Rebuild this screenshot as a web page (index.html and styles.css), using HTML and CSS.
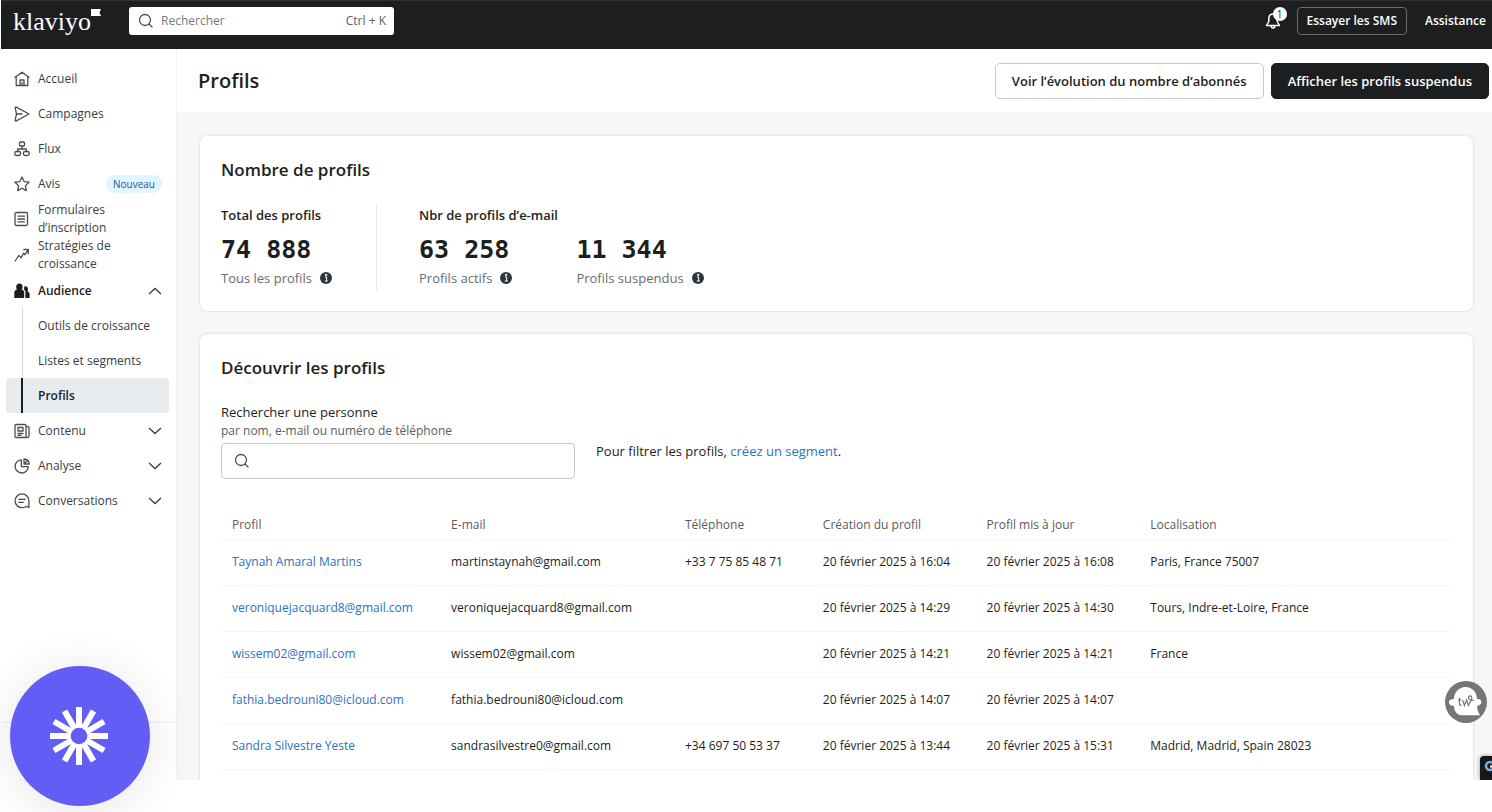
FILE: index.html
```html
<!DOCTYPE html>
<html lang="fr">
<head>
<meta charset="utf-8">
<title>Profils</title>
<link rel="stylesheet" href="styles.css">
</head>
<body>
<div class="app">
  <header class="topbar">
    <a class="logo" href="#">klaviyo<svg class="logo-flag" viewBox="0 0 10 7"><path d="M0 0h10L8.500 3.500 10 7H0z" fill="#fff"/></svg></a>
    <label class="global-search">
      <svg class="icon" viewBox="0 0 16 16"><circle cx="7" cy="7" r="5.500"/><path d="M11 11l3 3"/></svg>
      <input type="search" placeholder="Rechercher" aria-label="Rechercher">
      <span class="shortcut">Ctrl + K</span>
    </label>
    <div class="topbar-actions">
      <button class="bell" aria-label="Notifications">
        <svg class="icon bell-icon" viewBox="0 0 16 18"><path d="M8 2C5.200 2 3.800 4 3.800 6.500v3L1.500 13.500h13L12.200 9.500v-3C12.200 4 10.800 2 8 2zM6.200 14c0 2.500 3.600 2.500 3.600 0"/></svg>
        <span class="bell-count">1</span>
      </button>
      <button class="sms">Essayer les SMS</button>
      <a class="help" href="#">Assistance</a>
    </div>
  </header>

  <div class="body">
    <aside class="sidebar">
      <nav class="nav">
        <a class="nav-item" href="#"><svg class="icon" viewBox="0 0 16 16"><path d="M1 6.300L8 1.200l7 5.100M2.200 5.600v8.900h11.600V5.600M6 14.500V9h4v5.500M8 11.500v3"/></svg>Accueil</a>
        <a class="nav-item" href="#"><svg class="icon" viewBox="0 0 16 16"><path d="M1.200 1.800c0-.7.500-1 1.100-.7L15 8 2.300 14.900c-.6.300-1.200 0-1.100-.7L2.500 8zM2.500 8H8"/></svg>Campagnes</a>
        <a class="nav-item" href="#"><svg class="icon" viewBox="0 0 16 16"><rect x="5.500" y="1" width="5" height="4" rx="1"/><rect x=".8" y="10.500" width="5.800" height="4" rx="1.800"/><rect x="9.400" y="10.500" width="5.800" height="4" rx="1.800"/><path d="M8 5v3M3.700 10.500V8h8.600v2.500"/></svg>Flux</a>
        <a class="nav-item" href="#"><svg class="icon" viewBox="0 0 16 16"><path d="M8 1l2.100 4.600 4.900.6-3.600 3.400.9 5L8 12.200l-4.300 2.400.9-5L1 6.200l4.900-.6z"/></svg>Avis<span class="tag">Nouveau</span></a>
        <a class="nav-item" href="#"><svg class="icon" viewBox="0 0 16 16"><rect x="1" y="1.500" width="12.500" height="13" rx="1.500"/><path d="M4 5.200h6.500M4 8h6.500M4 10.800h6.500"/></svg><span>Formulaires d’inscription</span></a>
        <a class="nav-item" href="#"><svg class="icon" viewBox="0 0 16 16"><path d="M1.200 14l3.600-5.500 2.400 2.200 2.300-4.500 1.300 1.500L14 3.200M9.800 2.500h4.500v4.200"/></svg><span>Stratégies de croissance</span></a>
        <button class="nav-item nav-open" aria-expanded="true"><svg class="icon" viewBox="0 0 16 16"><path fill="#1d1e20" stroke="none" d="M5.500.5C7.600.5 8.700 2 8.600 4c0 1.300-.4 2-.8 2.600 1.600.6 2.400 1.600 2.400 3.200V15H.3V9.800c0-1.600.9-2.600 2.700-3.200C2.500 6 2.200 5.300 2.200 4 2.200 2 3.500.5 5.500.5zM10.200 3.500c2.600-.6 4 1 3.800 3-.1.900-.3 1.300-.6 1.800 1.400.7 2.200 1.600 2.200 3V15h-4.200V9.500c0-1.200-.6-2.200-1.600-2.900.5-1 .6-2 .4-3.100z"/></svg>Audience<svg class="chevron" viewBox="0 0 14 8"><path d="M1 7l6-5.500L13 7"/></svg></button>
        <div class="subnav">
          <a class="nav-sub" href="#">Outils de croissance</a>
          <a class="nav-sub" href="#">Listes et segments</a>
          <a class="nav-sub nav-current" href="#" aria-current="page">Profils</a>
        </div>
        <button class="nav-item"><svg class="icon" viewBox="0 0 16 16"><path d="M12 14.500H2.200c-.8 0-1.200-.4-1.200-1.200V2.700c0-.8.4-1.200 1.200-1.200h8.600c.8 0 1.200.4 1.200 1.200V13c0 2 3 2 3 0V4.800c0-.8-.4-1.200-1.200-1.200H12M4 4.500h5V8H4zM4 10.500h5M4 12.300h3"/></svg>Contenu<svg class="chevron" viewBox="0 0 14 8"><path d="M1 1l6 5.500L13 1"/></svg></button>
        <button class="nav-item"><svg class="icon" viewBox="0 0 16 16"><path d="M7.300 1.800A6.600 6.600 0 1 0 14.300 8.700H7.300zM10 1v5h5.200C15 3.200 13 1.200 10 1zM10 6l3.200-3.200"/></svg>Analyse<svg class="chevron" viewBox="0 0 14 8"><path d="M1 1l6 5.500L13 1"/></svg></button>
        <button class="nav-item"><svg class="icon" viewBox="0 0 16 16"><path d="M14.900 14.500V7.800A6.900 6.900 0 1 0 8 14.700c1.600 0 2.800-.4 4-1.300zM4.800 6.300h6.500M4.800 9.300h4.500"/></svg>Conversations<svg class="chevron" viewBox="0 0 14 8"><path d="M1 1l6 5.500L13 1"/></svg></button>
      </nav>
      <div class="sidebar-foot"></div>
    </aside>

    <main class="main">
      <div class="page-head">
        <h1>Profils</h1>
        <button class="btn">Voir l’évolution du nombre d’abonnés</button>
        <button class="btn btn-dark">Afficher les profils suspendus</button>
      </div>
      <div class="content">
        <section class="card">
          <h2>Nombre de profils</h2>
          <div class="stats">
            <div class="stat-group stat-total">
              <h3>Total des profils</h3>
              <div class="stat"><div class="number">74 888</div><div class="caption">Tous les profils <svg class="info" viewBox="0 0 12 12"><circle cx="6" cy="6" r="6" fill="#2c3640"/><path d="M5 5h1.600v4M4.800 9h3M5.500 2.300h1.300v1.300H5.500z" fill="none" stroke="#fff"/></svg></div></div>
            </div>
            <div class="stat-group">
              <h3>Nbr de profils d’e-mail</h3>
              <div class="stat-pair">
                <div class="stat"><div class="number">63 258</div><div class="caption">Profils actifs <svg class="info" viewBox="0 0 12 12"><circle cx="6" cy="6" r="6" fill="#2c3640"/><path d="M5 5h1.600v4M4.800 9h3M5.500 2.300h1.300v1.300H5.500z" fill="none" stroke="#fff"/></svg></div></div>
                <div class="stat"><div class="number">11 344</div><div class="caption">Profils suspendus <svg class="info" viewBox="0 0 12 12"><circle cx="6" cy="6" r="6" fill="#2c3640"/><path d="M5 5h1.600v4M4.800 9h3M5.500 2.300h1.300v1.300H5.500z" fill="none" stroke="#fff"/></svg></div></div>
              </div>
            </div>
          </div>
        </section>

        <section class="card">
          <h2>Découvrir les profils</h2>
          <div class="finder">
            <div class="field">
              <label for="person">Rechercher une personne</label>
              <span class="hint" id="person-hint">par nom, e-mail ou numéro de téléphone</span>
              <div class="field-box">
                <svg class="icon" viewBox="0 0 16 16"><circle cx="7" cy="7" r="5.500"/><path d="M11 11l3 3"/></svg>
                <input id="person" type="text" aria-describedby="person-hint">
              </div>
            </div>
            <p class="filter-note">Pour filtrer les profils, <a href="#">créez un segment</a>.</p>
          </div>
          <table class="profiles">
            <colgroup><col class="c-profile"><col class="c-mail"><col class="c-phone"><col class="c-date"><col class="c-date"><col></colgroup>
            <thead><tr><th>Profil</th><th>E-mail</th><th>Téléphone</th><th>Création du profil</th><th>Profil mis à jour</th><th>Localisation</th></tr></thead>
            <tbody>
              <tr><td><a href="#">Taynah Amaral Martins</a></td><td>martinstaynah@gmail.com</td><td>+33 7 75 85 48 71</td><td>20 février 2025 à 16:04</td><td>20 février 2025 à 16:08</td><td>Paris, France 75007</td></tr>
              <tr><td><a href="#">veroniquejacquard8@gmail.com</a></td><td>veroniquejacquard8@gmail.com</td><td></td><td>20 février 2025 à 14:29</td><td>20 février 2025 à 14:30</td><td>Tours, Indre-et-Loire, France</td></tr>
              <tr><td><a href="#">wissem02@gmail.com</a></td><td>wissem02@gmail.com</td><td></td><td>20 février 2025 à 14:21</td><td>20 février 2025 à 14:21</td><td>France</td></tr>
              <tr><td><a href="#">fathia.bedrouni80@icloud.com</a></td><td>fathia.bedrouni80@icloud.com</td><td></td><td>20 février 2025 à 14:07</td><td>20 février 2025 à 14:07</td><td></td></tr>
              <tr><td><a href="#">Sandra Silvestre Yeste</a></td><td>sandrasilvestre0@gmail.com</td><td>+34 697 50 53 37</td><td>20 février 2025 à 13:44</td><td>20 février 2025 à 15:31</td><td>Madrid, Madrid, Spain 28023</td></tr>
            </tbody>
          </table>
        </section>
      </div>
    </main>
  </div>

  <button class="chat" aria-label="Chat">
    <svg viewBox="0 0 42 42"><circle cx="21" cy="21" r="21" fill="#757776"/><path d="M9 18c0-7 5-12 11.500-12S32 11 32 18c2-.5 4.500.6 4.500 3S34 25 32.200 24.500c-.2 4 1 7.500 3 9.800H16.500C12 34.300 9 30 9 24.800 6.500 25 4 23.800 4 21.400S6.500 18 9 18z" fill="#fff"/><path d="M14.500 16.500v6c0 1.500.6 2 2 2M12.800 19h3.500M17.500 19l2 5.500 2-5.500 2 5.500 3.200-7c.7-3-3.200-3.500-3.200-.8 0 2.500 3 3 5.500 2.300" fill="none" stroke="#757776" stroke-width="1.200"/></svg>
  </button>
  <div class="corner"><svg viewBox="0 0 12 24"><circle cx="10" cy="10" r="4" fill="none" stroke="#7eb0dd" stroke-width="2.500"/><path d="M10 10.500h2" stroke="#fff" stroke-width="2"/></svg></div>
</div>

<button class="launcher" aria-label="Ouvrir le widget">
  <svg viewBox="-30 -30 60 60"><g stroke="#fff" stroke-width="6"><path d="M0-29V29M-29 0H29"/><path d="M-14.500-25.100L14.500 25.100M14.500-25.100L-14.500 25.100M-25.100-14.500L25.100 14.500M-25.100 14.500L25.100-14.500"/></g><circle r="11" fill="#fff"/><circle r="8.300" fill="#625df5"/></svg>
</button>
</body>
</html>
```
FILE: styles.css
```css
* { box-sizing: border-box; }

body {
  margin: 0;
  min-height: 100vh;
  background: #fff;
  color: #1d1e20;
  font: 12px/18px "Open Sans", "Noto Sans", sans-serif;
}

h1, h2, h3, p { margin: 0; font-weight: 600; }
a { color: #2b72bf; text-decoration: none; }
button, input { font: inherit; color: inherit; }
button { cursor: pointer; }

.app {
  position: relative;
  display: flex;
  flex-direction: column;
  height: calc(100vh - 32px);
  padding-left: 1px;
  overflow: hidden;
}

.icon {
  flex: none;
  width: 16px;
  height: 16px;
  fill: none;
  stroke: #4a4c4f;
  stroke-width: 1.3;
  stroke-linejoin: round;
  stroke-linecap: round;
}

/* Top bar */
.topbar {
  display: flex;
  flex: none;
  align-items: flex-start;
  height: 49px;
  padding: 6px 6px 0 12px;
  background: #1d1e20;
  border-top: 1px solid #303134;
}

.logo {
  display: flex;
  width: 116px;
  color: #fff;
  font: 26px/30px "Liberation Serif", serif;
}
.logo-flag { width: 10px; height: 7px; margin-top: 2px; }

.global-search {
  display: flex;
  align-items: center;
  gap: 7px;
  width: 265px;
  height: 28px;
  padding: 0 8px 0 9px;
  background: #fff;
  border-radius: 3px;
  color: #5a5c60;
}
.global-search input {
  flex: 1;
  min-width: 0;
  padding: 0;
  border: 0;
  outline: 0;
  background: none;
}
.global-search input::placeholder { color: #77797c; }

.topbar-actions {
  display: flex;
  align-items: center;
  gap: 18px;
  margin-left: auto;
  color: #fff;
  font-weight: 600;
}
.bell { position: relative; width: 16px; height: 28px; padding: 0; border: 0; background: none; margin-right: -2px; }
.bell-icon { display: block; width: 16px; height: 18px; stroke: #fff; stroke-width: 1.5; }
.bell-count {
  position: absolute;
  top: 0;
  right: -6px;
  width: 14px;
  height: 14px;
  border-radius: 50%;
  background: #fff;
  color: #1d1e20;
  font-size: 10px;
  font-weight: 400;
  line-height: 14px;
}
.sms { height: 28px; padding: 0 9px; border: 1px solid #6b6d70; border-radius: 4px; background: none; }
.help { color: #fff; }

/* Sidebar */
.body { display: flex; flex: 1; min-height: 0; }
.sidebar { display: flex; flex: none; flex-direction: column; width: 176px; border-right: 1px solid #f0f1f3; }
.nav { display: flex; flex: 1; flex-direction: column; padding: 12px 7px 0 5px; }

.nav-item {
  display: flex;
  flex: none;
  align-items: center;
  gap: 8px;
  min-height: 35px;
  padding: 0 7px 0 8px;
  border: 0;
  background: none;
  color: #3a3c3f;
  font-weight: 500;
  text-align: left;
}
.nav-item > span:not(.tag) { max-width: 90px; }
.nav-open { color: #1d1e20; font-weight: 600; }
.tag {
  margin-left: auto;
  padding: 0 7px;
  border-radius: 9px;
  background: #e0f5ff;
  color: #24578f;
  font-size: 10px;
}
.chevron { width: 14px; height: 8px; margin-left: auto; fill: none; stroke: #3a3c3f; stroke-width: 1.3; }

.subnav { display: flex; flex-direction: column; }
.nav-sub {
  display: flex;
  align-items: center;
  height: 35px;
  padding-left: 32px;
  border-radius: 4px;
  background: linear-gradient(#d4d9de, #d4d9de) 16px 0 / 1px 100% no-repeat;
  color: #3a3c3f;
  font-weight: 500;
}
.nav-current {
  background: linear-gradient(#1d1e20, #1d1e20) 15px 0 / 2px 100% no-repeat #e9ecef;
  color: #1d1e20;
  font-weight: 600;
}
.sidebar-foot { height: 58px; border-top: 1px solid #f0f1f3; }

/* Page */
.main { display: flex; flex: 1; flex-direction: column; min-width: 0; background: #f6f7f9; }
.page-head {
  display: flex;
  flex: none;
  align-items: center;
  gap: 7px;
  height: 63px;
  padding: 0 3px 0 21px;
  background: #fff;
}
h1 { margin-right: auto; font-size: 20px; line-height: 28px; }
.btn {
  height: 36px;
  padding: 0 16px;
  border: 1px solid #c6c8cb;
  border-radius: 5px;
  background: #fff;
  font-size: 13px;
  font-weight: 600;
}
.btn-dark { border-color: #1d1e20; background: #1d1e20; color: #fff; }

.content { display: flex; flex-direction: column; gap: 23px; padding: 24px 19px 0 23px; }
.card {
  padding: 22px 21px 21px;
  border-radius: 8px;
  background: #fff;
  box-shadow: 0 0 3px rgba(30, 50, 60, 0.18);
}
h2 { font-size: 17px; line-height: 24px; }

.stats { display: flex; margin-top: 22px; }
.stat-total { width: 156px; margin-right: 42px; border-right: 1px solid #e6e8eb; }
h3 { font-size: 13px; line-height: 22px; }
.number { margin-top: 8px; font: bold 25px/32px "DejaVu Sans Mono", monospace; }
.caption { display: flex; align-items: center; gap: 8px; color: #6a6c70; font-size: 13px; line-height: 24px; }
.info { width: 12px; height: 12px; }
.stat-pair { display: flex; gap: 64px; }

.finder { display: flex; gap: 21px; margin-top: 22px; }
.field { display: flex; flex-direction: column; width: 354px; }
.field label { font-size: 13px; line-height: 20px; }
.hint { color: #5a5c60; line-height: 18px; }
.field-box {
  display: flex;
  align-items: center;
  gap: 8px;
  height: 36px;
  margin-top: 3px;
  padding: 0 12px;
  border: 1px solid #c6c8cb;
  border-radius: 4px;
}
.field-box input { flex: 1; min-width: 0; border: 0; outline: 0; background: none; }
.filter-note { padding-top: 39px; font-size: 13px; font-weight: 400; line-height: 20px; }

.profiles { width: 100%; margin-top: 32px; border-collapse: collapse; table-layout: fixed; }
.c-profile { width: 17.8%; }
.c-mail { width: 19%; }
.c-phone { width: 11.2%; }
.c-date { width: 13.3%; }
.profiles th, .profiles td { padding: 0 0 0 11px; border-bottom: 1px solid #f3f4f5; text-align: left; white-space: nowrap; }
.profiles th { height: 28px; color: #5a5c60; font-weight: 400; }
.profiles td { height: 46px; }

/* Floating widgets */
.chat { position: absolute; right: 5px; bottom: 57px; width: 42px; height: 42px; padding: 0; border: 0; background: none; }
.chat svg { display: block; }
.corner { position: absolute; right: 0; bottom: 0; width: 12px; height: 24px; border-radius: 4px 0 0 0; background: #16181a; box-shadow: 0 0 4px rgba(0, 0, 0, 0.4); }
.corner svg { display: block; }
.launcher {
  position: fixed;
  left: 10px;
  bottom: 6px;
  display: grid;
  place-items: center;
  width: 140px;
  height: 140px;
  padding: 0 2px 0 0;
  border: 0;
  border-radius: 50%;
  background: #625df5;
  box-shadow: 0 4px 48px rgba(0, 0, 0, 0.1);
}
.launcher svg { width: 60px; height: 60px; }
```
